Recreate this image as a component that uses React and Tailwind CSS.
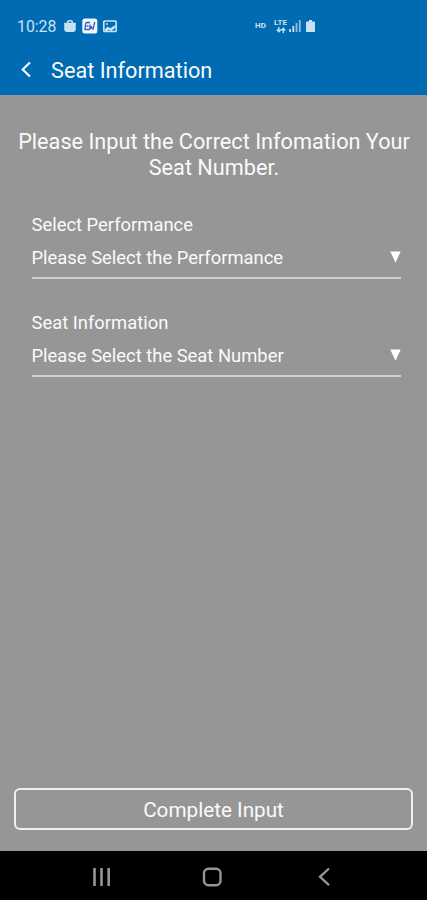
import React from "react";

const FIELDS = [
  { label: "Select Performance", placeholder: "Please Select the Performance" },
  { label: "Seat Information", placeholder: "Please Select the Seat Number" },
];

function StatusBar() {
  return (
    <div className="flex h-[45px] items-center pt-[7px] pl-[17px] text-[#c5e3f5]">
      <span className="mt-0.5 w-[47px] text-[15.8px] leading-5">10:28</span>

      {/* shopping bag */}
      <svg className="h-4 w-3 shrink-0" viewBox="0 0 12 16">
        <path d="M3.7 5.5V4a1.3 1.3 0 0 1 1.3-1.3h2A1.3 1.3 0 0 1 8.3 4v1.5" fill="none" stroke="currentColor" strokeWidth="1.5" />
        <path d="M1 4.7h10a.8.8 0 0 1 .8 1v5.3a3 3 0 0 1-3 3H3.2a3 3 0 0 1-3-3V5.7a.8.8 0 0 1 .8-1z" fill="currentColor" />
      </svg>

      {/* app badge */}
      <svg className="ml-1.5 h-4 w-4 shrink-0" viewBox="0 0 16 16">
        <rect x=".3" y=".5" width="15" height="15" rx="2.5" fill="#f0f8ff" />
        <path d="M8 4.5H5Q3.8 4.5 3.6 6L3 11.5H7Q9 11 9.5 8M4.5 8h2M8 6.5v4M9.5 9.5l1.5 1.5L12.8 4" fill="none" stroke="#3e55bd" strokeWidth="1.3" />
      </svg>

      {/* picture */}
      <svg className="ml-[5px] h-4 w-3.5 shrink-0" viewBox="0 0 14 16">
        <rect x=".8" y="3" width="12.4" height="10.5" rx="1" fill="none" stroke="currentColor" strokeWidth="1.7" />
        <path d="M1.5 11.8l3.2-3.3 2.3 1.8 5.5-3.3v2.500l-4 3.500-3-1-2 1.500z" fill="currentColor" />
        <circle cx="4" cy="5.9" r="1" fill="currentColor" />
      </svg>

      <span className="ml-[138px] w-[17px] text-[8px] leading-4 font-bold">HD</span>
      <div className="flex w-[17px] flex-col items-center">
        <span className="text-[8px] leading-[8px] font-bold">LTE</span>
        {/* data up / down */}
        <svg className="h-[6px] w-[10px]" viewBox="0 0 10 6">
          <path d="M2.8 0v4M.8 2.5l2 2.3 2-2.3M7.3 6V2M5.3 3.5l2-2.3 2 2.3" fill="none" stroke="currentColor" strokeWidth="1.4" />
        </svg>
      </div>

      {/* signal */}
      <svg className="h-4 w-3 shrink-0" viewBox="0 0 12 16">
        <path d="M1 11v3M4.3 8v6" stroke="currentColor" strokeWidth="1.8" />
        <path d="M7.5 5v9M10.8 2v12" stroke="currentColor" strokeWidth="1.8" opacity=".7" />
      </svg>

      {/* battery */}
      <svg className="ml-[5px] h-4 w-[9px] shrink-0" viewBox="0 0 9 16">
        <path d="M3 2h3v1.5h2.2q.8 0 .8.8v9q0 .8-.8.8H.8q-.8 0-.8-.8v-9q0-.8.8-.8H3z" fill="currentColor" />
      </svg>
    </div>
  );
}

function Header() {
  return (
    <div className="flex h-[50px] items-center">
      <svg className="ml-5 h-[18px] w-3 shrink-0" viewBox="0 0 12 18">
        <path d="M10 1.5L2.7 8.5L10 15.5" fill="none" stroke="white" strokeWidth="2.1" />
      </svg>
      <h1 className="mt-px ml-[19px] text-[21.7px] leading-[26px]">Seat Information</h1>
    </div>
  );
}

function SelectField({ label, placeholder }) {
  return (
    <div className="h-[98px]">
      <p className="text-[18.4px] leading-[22px]">{label}</p>
      <div className="mt-2.5 flex h-[33px] justify-between border-b-2 border-[#d0d0d0]">
        <span className="text-[18.4px] leading-[24px]">{placeholder}</span>
        <svg className="mt-[5px] h-3 w-[11px]" viewBox="0 0 11 12">
          <path d="M.3.5h10.4L5.5 11.8z" fill="white" />
        </svg>
      </div>
    </div>
  );
}

function NavigationBar() {
  return (
    <div className="flex h-[49px] items-center bg-black pt-[3px] text-[#969696]">
      <svg className="ml-[92px] h-5 w-[19px]" viewBox="0 0 19 20">
        <path d="M2.5 1v18M9.5 1v18M16.7 1v18" stroke="currentColor" strokeWidth="2.6" />
      </svg>
      <svg className="ml-[91px] h-5 w-5" viewBox="0 0 20 20">
        <rect x="2" y="1.8" width="16.5" height="16.5" rx="4.5" fill="none" stroke="currentColor" strokeWidth="2.4" />
      </svg>
      <svg className="ml-[95px] h-5 w-3.5" viewBox="0 0 14 20">
        <path d="M12 1.5L3 9.8L12 18.2" fill="none" stroke="currentColor" strokeWidth="2.3" />
      </svg>
    </div>
  );
}

export default function App() {
  return (
    <div className="flex h-screen w-full flex-col overflow-hidden bg-[#969696] font-['Roboto',sans-serif] text-[#fafafa]">
      <div className="h-[95px] bg-[#006bb3]">
        <StatusBar />
        <Header />
      </div>

      <div className="flex flex-1 flex-col">
        <p className="mt-[34px] pl-px text-center text-[21.7px] leading-[26px]">
          Please Input the Correct Infomation Your
          <br />
          Seat Number.
        </p>

        <div className="mt-[33px] pr-[26px] pl-[31.5px]">
          {FIELDS.map(f => (
            <SelectField key={f.label} label={f.label} placeholder={f.placeholder} />
          ))}
        </div>

        <button className="mx-[14px] mt-auto mb-[21px] h-[42px] rounded-md border-2 border-[#f0f0f0] pt-1 text-[20.7px]">
          Complete Input
        </button>
      </div>

      <NavigationBar />
    </div>
  );
}
